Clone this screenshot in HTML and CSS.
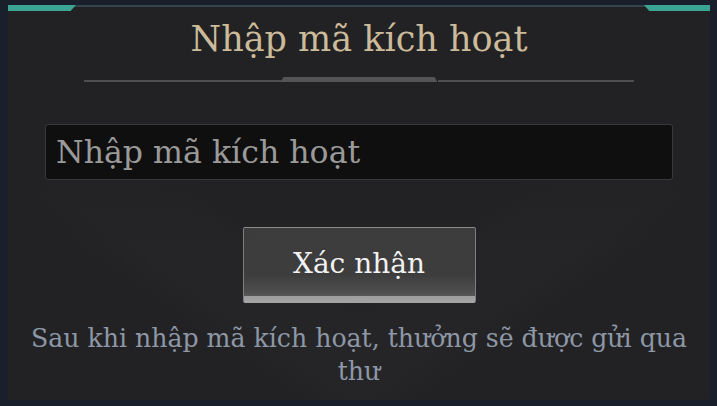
FILE: index.html
```html
<!DOCTYPE html>
<html lang="vi">
<head>
<meta charset="utf-8">
<title>Nhập mã kích hoạt</title>
<link rel="stylesheet" href="styles.css">
</head>
<body>
<div class="panel">
  <span class="accent accent-left"></span>
  <span class="accent accent-right"></span>
  <h1 class="title">Nhập mã kích hoạt</h1>
  <div class="divider">
    <span class="divider-line"></span>
    <span class="divider-raise"></span>
    <span class="divider-line"></span>
  </div>
  <input class="code-input" type="text" placeholder="Nhập mã kích hoạt">
  <button class="confirm" type="button">Xác nhận</button>
  <p class="note">Sau khi nhập mã kích hoạt, thưởng sẽ được gửi qua thư</p>
</div>
</body>
</html>
```
FILE: styles.css
```css
html, body {
  margin: 0;
  padding: 0;
}
body {
  width: 717px;
  height: 406px;
  background: #1a202b;
  overflow: hidden;
  font-family: "DejaVu Serif", "Liberation Serif", serif;
}
.panel {
  position: relative;
  box-sizing: border-box;
  width: 702px;
  height: 395px;
  margin: 5px 0 0 8px;
  border-top: 2px solid #34444d;
  border-radius: 0 0 4px 4px;
  background-color: #222224;
  background-image:
    linear-gradient(to bottom, #222224 0%, rgba(34,34,36,0) 45%),
    linear-gradient(to top right, rgba(255,255,255,0) 40%, rgba(255,255,255,0.016) 52%, rgba(255,255,255,0.016) 64%, rgba(255,255,255,0) 74%),
    linear-gradient(to top left, rgba(255,255,255,0) 40%, rgba(255,255,255,0.016) 52%, rgba(255,255,255,0.016) 64%, rgba(255,255,255,0) 74%);
  background-repeat: no-repeat;
  background-size: 100% 240px, 351px 240px, 351px 240px;
  background-position: left bottom, left bottom, right bottom;
  display: flex;
  flex-direction: column;
  align-items: center;
  padding: 12px 15px 0;
}
.accent {
  position: absolute;
  top: -2px;
  height: 6px;
  width: 68px;
  background: #3aa592;
}
.accent-left {
  left: 0;
  clip-path: polygon(0 0, 100% 0, 92% 100%, 0 100%);
}
.accent-right {
  right: 0;
  width: 66px;
  clip-path: polygon(0 0, 100% 0, 100% 100%, 8% 100%);
}
.title {
  margin: 0;
  font-size: 35px;
  line-height: 41px;
  font-weight: normal;
  color: #cbbb9b;
}
.divider {
  margin-top: 17px;
  width: 550px;
  height: 5px;
  display: flex;
  align-items: flex-end;
}
.divider-line {
  flex: 1;
  height: 2px;
  background: #4e4e4e;
}
.divider-raise {
  width: 157px;
  height: 5px;
  background: #545454;
  clip-path: polygon(3px 0, calc(100% - 3px) 0, 100% 100%, 0 100%);
}
.code-input {
  margin-top: 42px;
  box-sizing: border-box;
  width: 628px;
  height: 56px;
  padding: 0 10px;
  border: 1px solid #393939;
  border-radius: 3px;
  background: #0f0f0f;
  color: #c8c8c8;
  font-family: "DejaVu Serif", "Liberation Serif", serif;
  font-size: 31.6px;
  outline: none;
}
.code-input::placeholder {
  color: #9a9a9a;
}
.confirm {
  margin-top: 47px;
  box-sizing: border-box;
  width: 233px;
  height: 76px;
  padding: 0 0 5px;
  border: 1px solid #7e7e7e;
  border-top-color: #8c8c8c;
  border-bottom: 0;
  border-radius: 2px;
  background:
    linear-gradient(to bottom, #3c3c3c 0, #3d3d3d 62%, #4f4f4f 86%, #585858 91%, #9e9e9e 91%, #a4a4a4 100%);
  color: #f2f2f2;
  font-family: "DejaVu Serif", "Liberation Serif", serif;
  font-size: 28px;
  cursor: pointer;
}
.note {
  margin: 19px 0 0;
  text-align: center;
  font-size: 25.2px;
  line-height: 33px;
  color: #8d97a6;
}
```
